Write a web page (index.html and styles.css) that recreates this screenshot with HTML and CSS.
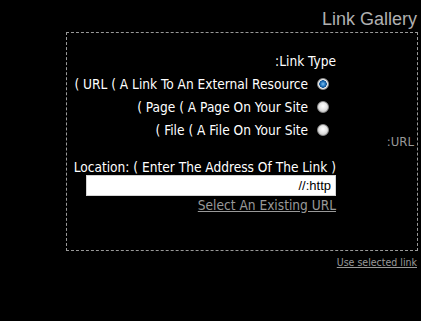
FILE: index.html
```html
<!DOCTYPE html>
<html lang="en" dir="rtl">
<head>
    <meta charset="UTF-8">
    <title>Link Gallery</title>
    <link rel="stylesheet" href="styles.css">
</head>
<body>
    <div class="gallery-title">Link Gallery</div>

    <div class="link-box">
        <div class="url-label">URL:</div>

        <div class="link-form">
            <div class="form-line">Link Type:</div>
            <label class="form-line">
                <input type="radio" name="link-type" value="url" checked>
                <span dir="ltr">( URL ( A Link To An External Resource</span>
            </label>
            <label class="form-line">
                <input type="radio" name="link-type" value="page">
                <span dir="ltr">( Page ( A Page On Your Site</span>
            </label>
            <label class="form-line">
                <input type="radio" name="link-type" value="file">
                <span dir="ltr">( File ( A File On Your Site</span>
            </label>

            <div class="location-label"><span dir="ltr">Location: ( Enter The Address Of The Link )</span></div>
            <input type="text" class="location-input" value="http://">
            <div class="form-line"><a href="#" class="existing-link">Select An Existing URL</a></div>
        </div>
    </div>

    <div class="footer-line"><a href="#" class="use-link">Use selected link</a></div>
</body>
</html>
```

FILE: styles.css
```css
body {
    margin: 0;
    background-color: #000;
    color: #fff;
    font-family: "DejaVu Sans Condensed", "DejaVu Sans", sans-serif;
    font-size: 13.6px;
}
.gallery-title {
    padding: 9px 4px 0 0;
    text-align: right;
    font-family: "Liberation Sans", Arial, sans-serif;
    font-size: 18px;
    line-height: 21px;
    color: #b0b0b0;
}
.link-box {
    margin: 2px 3px 0 66px;
    height: 217px;
    border: 1px dashed #999;
    display: flex;
}
.url-label {
    width: 78px;
    padding-right: 3px;
    align-self: center;
    color: #999;
    text-align: right;
    font-size: 13px;
}
.link-form {
    flex-grow: 1;
    padding-top: 17px;
    text-align: right;
}
.form-line {
    display: block;
    line-height: 23px;
}
.form-line input[type="radio"] {
    appearance: none;
    width: 12px;
    height: 12px;
    margin: 0 7px 0 5px;
    vertical-align: -1px;
    border-radius: 50%;
    border: 1px solid #8c8c8c;
    background: radial-gradient(circle at 50% 40%, #fff 0, #e6e6e6 45%, #b8b8b8 100%);
    box-sizing: border-box;
}
.form-line input[type="radio"]:checked {
    background: radial-gradient(circle at 50% 50%, #7cc0f0 0, #1f6fb8 2.5px, #0d4f8f 3.5px, #f4f4f4 4px, #d0d0d0 100%);
}
.location-label {
    margin-top: 17px;
    line-height: 16px;
}
.location-input {
    display: block;
    box-sizing: border-box;
    width: 250px;
    height: 21px;
    margin: 0 0 0 auto;
    padding: 0 4px;
    border: 1px solid #d4d4d4;
    background-color: #fff;
    color: #000;
    font-family: "Liberation Sans", Arial, sans-serif;
    font-size: 13px;
    direction: rtl;
}
.form-line .existing-link {
    color: #999;
}
.location-input + .form-line {
    line-height: 19px;
}
.footer-line {
    padding: 3px 4px 0 0;
    text-align: right;
    font-size: 10.5px;
    line-height: 16px;
}
.use-link {
    color: #999;
}
```
